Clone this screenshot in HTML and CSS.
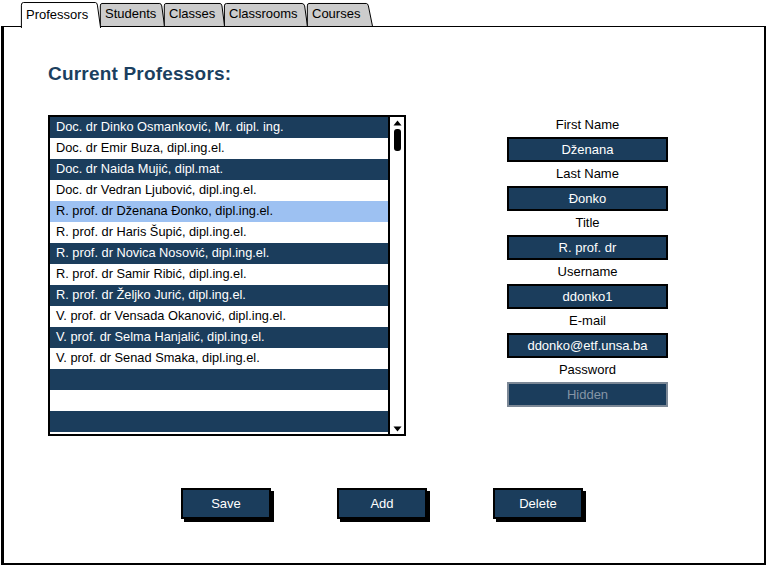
FILE: index.html
```html
<!DOCTYPE html>
<html>
<head>
<meta charset="utf-8">
<link rel="stylesheet" href="styles.css">
</head>
<body>
<div class="tabs">
  <div class="tab active tab-professors"><svg class="tab-bg" viewBox="0 0 100 25" preserveAspectRatio="none"><path d="M0.5,25 L0.5,3 Q0.5,0.5 3,0.5 L93,0.5 Q95,0.5 95.5,3 L99.5,25" vector-effect="non-scaling-stroke"/></svg><span class="tab-label">Professors</span></div>
  <div class="tab tab-students"><svg class="tab-bg" viewBox="0 0 100 25" preserveAspectRatio="none"><path d="M0.5,25 L0.5,3 Q0.5,0.5 3,0.5 L92,0.5 Q94,0.5 95,3 L99.5,25" vector-effect="non-scaling-stroke"/></svg><span class="tab-label">Students</span></div>
  <div class="tab tab-classes"><svg class="tab-bg" viewBox="0 0 100 25" preserveAspectRatio="none"><path d="M0.5,25 L0.5,3 Q0.5,0.5 3,0.5 L92,0.5 Q94,0.5 95,3 L99.5,25" vector-effect="non-scaling-stroke"/></svg><span class="tab-label">Classes</span></div>
  <div class="tab tab-classrooms"><svg class="tab-bg" viewBox="0 0 100 25" preserveAspectRatio="none"><path d="M0.5,25 L0.5,3 Q0.5,0.5 3,0.5 L93,0.5 Q95,0.5 96,3 L99.5,25" vector-effect="non-scaling-stroke"/></svg><span class="tab-label">Classrooms</span></div>
  <div class="tab tab-courses"><svg class="tab-bg" viewBox="0 0 100 25" preserveAspectRatio="none"><path d="M0.5,25 L0.5,3 Q0.5,0.5 3,0.5 L90,0.5 Q92,0.5 93,3 L99.5,25" vector-effect="non-scaling-stroke"/></svg><span class="tab-label">Courses</span></div>
</div>
<div class="panel">
  <h1 class="title">Current Professors:</h1>
  <div class="main">
    <div class="listbox">
      <div class="rows">
        <div class="row dark">Doc. dr Dinko Osmanković, Mr. dipl. ing.</div>
        <div class="row">Doc. dr Emir Buza, dipl.ing.el.</div>
        <div class="row dark">Doc. dr Naida Mujić, dipl.mat.</div>
        <div class="row">Doc. dr Vedran Ljubović, dipl.ing.el.</div>
        <div class="row selected">R. prof. dr Dženana Đonko, dipl.ing.el.</div>
        <div class="row">R. prof. dr Haris Šupić, dipl.ing.el.</div>
        <div class="row dark">R. prof. dr Novica Nosović, dipl.ing.el.</div>
        <div class="row">R. prof. dr Samir Ribić, dipl.ing.el.</div>
        <div class="row dark">R. prof. dr Željko Jurić, dipl.ing.el.</div>
        <div class="row">V. prof. dr Vensada Okanović, dipl.ing.el.</div>
        <div class="row dark">V. prof. dr Selma Hanjalić, dipl.ing.el.</div>
        <div class="row">V. prof. dr Senad Smaka, dipl.ing.el.</div>
        <div class="row dark"></div>
        <div class="row"></div>
        <div class="row dark"></div>
      </div>
      <div class="scrollbar">
        <div class="arrow"><svg width="9" height="6" viewBox="0 0 9 6"><path d="M4.5,0.5 L8.5,5.5 L0.5,5.5 Z"/></svg></div>
        <div class="track"><div class="thumb"></div></div>
        <div class="arrow"><svg width="9" height="6" viewBox="0 0 9 6"><path d="M0.5,0.5 L8.5,0.5 L4.5,5.5 Z"/></svg></div>
      </div>
    </div>
    <div class="form">
      <div class="label">First Name</div>
      <div class="field">Dženana</div>
      <div class="label">Last Name</div>
      <div class="field">Đonko</div>
      <div class="label">Title</div>
      <div class="field">R. prof. dr</div>
      <div class="label">Username</div>
      <div class="field">ddonko1</div>
      <div class="label">E-mail</div>
      <div class="field">ddonko@etf.unsa.ba</div>
      <div class="label">Password</div>
      <div class="field disabled">Hidden</div>
    </div>
  </div>
  <div class="buttons">
    <div class="btn">Save</div>
    <div class="btn">Add</div>
    <div class="btn">Delete</div>
  </div>
</div>
</body>
</html>
```
FILE: styles.css
```css
* { box-sizing: border-box; }
html, body {
  margin: 0;
  padding: 0;
  background: #fff;
}
body {
  width: 767px;
  height: 566px;
  overflow: hidden;
  font-family: "Liberation Sans", Arial, sans-serif;
  color: #000;
}
.tabs {
  display: flex;
  align-items: flex-end;
  height: 27px;
  padding-left: 21px;
}
.tab {
  position: relative;
  height: 24px;
  margin-right: -1px;
  padding: 0 0 0 5px;
  font-size: 13px;
  line-height: 22px;
}
.tab-professors { width: 80px; }
.tab-students { width: 65px; }
.tab-classes { width: 61px; }
.tab-classrooms { width: 84px; }
.tab-courses { width: 66px; }
.tab.active {
  height: 26px;
  z-index: 2;
  padding-top: 2px;
  margin-bottom: -1px;
}
.tab-bg {
  position: absolute;
  left: 0;
  top: 0;
  width: 100%;
  height: 100%;
  overflow: visible;
}
.tab-bg path {
  fill: #cccccc;
  stroke: #000;
  stroke-width: 1px;
}
.tab.active .tab-bg path { fill: #fff; }
.tab-label {
  position: relative;
}
.panel {
  position: relative;
  z-index: 1;
  margin-left: 1px;
  margin-top: -1px;
  width: 765px;
  height: 539px;
  border-style: solid;
  border-color: #000;
  border-width: 1px 2px 2px 3px;
  padding: 35px 0 0 44px;
}
.title {
  margin: 0;
  font-size: 19px;
  line-height: 23px;
  font-weight: bold;
  color: #1b3f5f;
  letter-spacing: 0.2px;
}
.main {
  display: flex;
  align-items: flex-start;
  margin-top: 30px;
}
.listbox {
  display: flex;
  width: 358px;
  height: 321px;
  border: 2px solid #000;
  background: #fff;
}
.rows {
  flex: 1;
  display: flex;
  flex-direction: column;
}
.row {
  height: 21px;
  line-height: 20px;
  padding-left: 6px;
  font-size: 12.8px;
  color: #000;
  white-space: nowrap;
  background: #fff;
}
.row.dark {
  background: #1b3d5c;
  color: #fff;
}
.row.selected {
  background: #9dc1f2;
  color: #000;
}
.scrollbar {
  width: 16px;
  border-left: 2px solid #000;
  display: flex;
  flex-direction: column;
  background: #fff;
}
.arrow {
  height: 11px;
  display: flex;
  align-items: center;
  justify-content: center;
}
.arrow svg path { fill: #000; }
.track {
  flex: 1;
  display: flex;
  justify-content: center;
  padding-top: 1px;
}
.thumb {
  width: 7px;
  height: 22px;
  background: #000;
  border-radius: 3px;
}
.form {
  width: 161px;
  margin-left: 101px;
  margin-top: -2px;
  display: flex;
  flex-direction: column;
}
.label {
  height: 24px;
  line-height: 24px;
  text-align: center;
  font-size: 13px;
}
.field {
  height: 25px;
  line-height: 21px;
  border: 2px solid #000;
  background: #1b3d5c;
  color: #fff;
  text-align: center;
  font-size: 13px;
}
.field.disabled {
  border-color: #7c8896;
  color: #8595a6;
}
.buttons {
  display: flex;
  gap: 66px;
  margin-top: 52px;
  margin-left: 133px;
}
.btn {
  width: 90px;
  height: 31px;
  line-height: 28px;
  border: 2px solid #000;
  background: #1b3d5c;
  color: #fff;
  text-align: center;
  font-size: 13px;
  box-shadow: 3px 3px 0 #000;
}
```
